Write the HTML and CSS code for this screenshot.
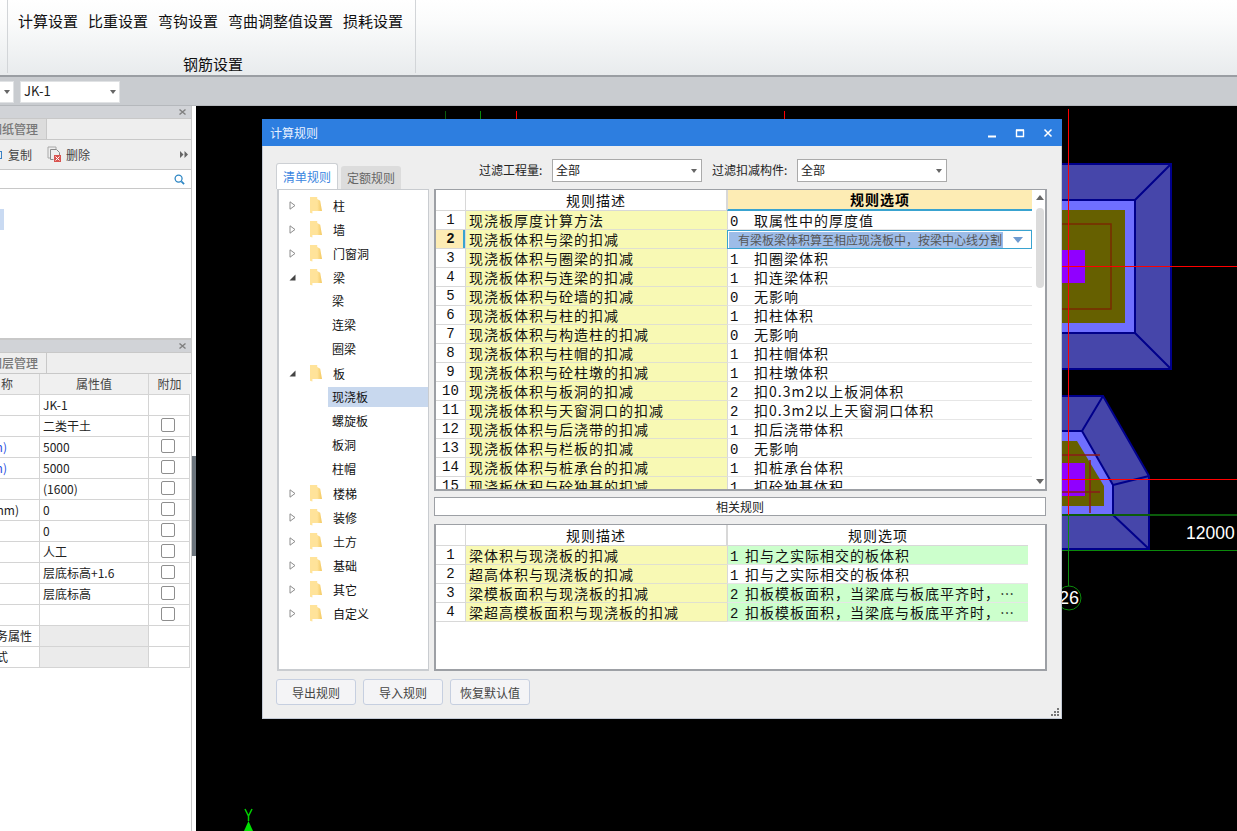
FILE: index.html
```html
<!DOCTYPE html>
<html lang="zh">
<head>
<meta charset="utf-8">
<title>计算规则</title>
<link rel="stylesheet" href="styles.css">
</head>
<body>
<div class="app">
  <header class="ribbon">
    <div class="ribbon-group">
      <div class="ribbon-items">
        <span>计算设置</span><span>比重设置</span><span>弯钩设置</span><span>弯曲调整值设置</span><span>损耗设置</span>
      </div>
      <div class="ribbon-label">钢筋设置</div>
    </div>
  </header>
  <div class="selector-bar">
    <div class="top-combo top-combo-a"><i class="arrow"></i></div>
    <div class="top-combo top-combo-b"><span>JK-1</span><i class="arrow"></i></div>
  </div>
  <div class="workspace">
    <aside class="side">
      <section class="panel panel-draw">
        <div class="panel-title"><svg width="7" height="6" viewBox="0 0 7 6"><path d="M.5.500l6 5M6.500.500l-6 5" stroke="#808080" stroke-width="1.400"/></svg></div>
        <div class="panel-tabs"><div class="panel-tab">图纸管理</div></div>
        <div class="panel-tools">
          <i class="copy-edge"></i>
          <span class="tool-copy">复制</span>
          <svg class="tool-icon" width="15" height="17" viewBox="0 0 15 17"><path d="M1 1h8v2M1 1v11h2" fill="none" stroke="#a8a8a8"/><path d="M3.500 3.500h6l3 3v3M3.500 3.500v10h3" fill="none" stroke="#8a8a8a"/><rect x="7" y="9" width="7" height="7" fill="#d9534f"/><path d="M8.500 10.500l4 4M12.500 10.500l-4 4" stroke="#fff"/></svg>
          <span class="tool-del">删除</span>
          <svg class="tool-more" width="8" height="7" viewBox="0 0 8 7"><path d="M0 0l3.500 3.500L0 7zM4.500 0L8 3.500 4.500 7z" fill="#666"/></svg>
        </div>
        <div class="panel-search">
          <svg width="11" height="11" viewBox="0 0 12 12"><circle cx="5" cy="5" r="3.800" fill="none" stroke="#2d86c4" stroke-width="1.400"/><path d="M8 8l3 3" stroke="#2d86c4" stroke-width="1.800"/></svg>
        </div>
        <div class="panel-list"><div class="list-pick"></div></div>
      </section>
      <section class="panel panel-prop">
        <div class="panel-title"><svg width="7" height="6" viewBox="0 0 7 6"><path d="M.5.500l6 5M6.500.500l-6 5" stroke="#808080" stroke-width="1.400"/></svg></div>
        <div class="panel-tabs"><div class="panel-tab">图层管理</div></div>
        <div class="prop-table">
          <div class="pc head name">称</div><div class="pc head mid">属性值</div><div class="pc head mid">附加</div>
          <div class="pc name"></div><div class="pc">JK-1</div><div class="pc"></div>
          <div class="pc name"></div><div class="pc">二类干土</div><div class="pc box"><i></i></div>
          <div class="pc name blue">(mm)</div><div class="pc">5000</div><div class="pc box"><i></i></div>
          <div class="pc name blue">(mm)</div><div class="pc">5000</div><div class="pc box"><i></i></div>
          <div class="pc name"></div><div class="pc">(1600)</div><div class="pc box"><i></i></div>
          <div class="pc name">(mm)</div><div class="pc">0</div><div class="pc box"><i></i></div>
          <div class="pc name"></div><div class="pc">0</div><div class="pc box"><i></i></div>
          <div class="pc name"></div><div class="pc">人工</div><div class="pc box"><i></i></div>
          <div class="pc name"></div><div class="pc">层底标高+1.6</div><div class="pc box"><i></i></div>
          <div class="pc name"></div><div class="pc">层底标高</div><div class="pc box"><i></i></div>
          <div class="pc name"></div><div class="pc"></div><div class="pc box"><i></i></div>
          <div class="pc name biz">业务属性</div><div class="pc off"></div><div class="pc"></div>
          <div class="pc name sty">样式</div><div class="pc off"></div><div class="pc"></div>
        </div>
      </section>
    </aside>
    <div class="splitter"><i></i></div>
    <main class="canvas">
      <svg class="drawing" width="1041" height="725" viewBox="196 106 1041 725">
        <g stroke="#00008b" stroke-width="2" fill="#4646aa">
          <rect x="1000" y="164" width="171" height="205"/>
          <rect x="1000" y="200" width="135" height="133" fill="#6f6fff"/>
          <path d="M1135 200L1171 164M1135 333L1171 369" fill="none"/>
        </g>
        <rect x="1000" y="210" width="125" height="113" fill="#666000"/>
        <path d="M1000 224H1111V309H1000" fill="none" stroke="#7a2a00" stroke-width="1.500"/>
        <rect x="1000" y="250" width="85" height="33" fill="#9000ff"/>
        <path d="M1000 396H1103L1149 476V549H1000Z" fill="#4646aa" stroke="#00008b" stroke-width="2"/>
        <path d="M1000 431H1082L1113 485V515H1000Z" fill="#6f6fff" stroke="#00008b" stroke-width="2"/>
        <path d="M1082 431L1103 396M1113 485L1149 476M1113 515L1149 549" fill="none" stroke="#00008b" stroke-width="2"/>
        <path d="M1000 441H1077L1104 486V506H1000Z" fill="#666000"/>
        <rect x="1000" y="463" width="85" height="33" fill="#9000ff"/>
        <path d="M1000 455H1100M1000 492H1100M1090 460V513" stroke="#8b1a1a" stroke-width="1.500" fill="none"/>
        <path d="M1000 515H1237" stroke="#0b5c0b" stroke-width="2" fill="none"/>
        <path d="M1000 550.500H1237M1068.500 515V586" stroke="#0b8a0b" fill="none"/>
        <path d="M1068.500 109V515M1000 266.500H1237M1000 479.500H1237" stroke="#f00" fill="none"/>
        <path d="M445.500 111V119" stroke="#0b5c0b" fill="none"/>
        <path d="M480.500 111V119" stroke="#0b8a0b" fill="none"/>
        <path d="M516.500 111V119M784.500 111V119" stroke="#f00" fill="none"/>
        <circle cx="1069" cy="598" r="12" fill="none" stroke="#0b8a0b"/>
        <text x="1069" y="604" class="cad-num" text-anchor="middle">26</text>
        <text x="1186" y="539" class="cad-dim">12000</text>
        <path d="M245 809L248.500 816L252 809M248.500 816V821" stroke="#00d000" stroke-width="1.500" fill="none"/>
        <path d="M248.500 821L244 831H253Z" fill="#00e000"/>
      </svg>

      <div class="dialog">
        <div class="dialog-title">
          <span class="dialog-name">计算规则</span>
          <div class="win-buttons">
            <svg width="10" height="10" viewBox="0 0 10 10"><path d="M1 8.500h8" stroke="#fff" stroke-width="2"/></svg>
            <svg width="10" height="10" viewBox="0 0 10 10"><path d="M1.500 2.500h7v6h-7z" fill="none" stroke="#fff" stroke-width="1.400"/><path d="M1 2h8" stroke="#fff" stroke-width="1.500"/></svg>
            <svg width="10" height="10" viewBox="0 0 10 10"><path d="M1.500 1.500l7 7M8.500 1.500l-7 7" stroke="#fff" stroke-width="1.500"/></svg>
          </div>
        </div>
        <div class="dialog-body">
          <div class="left-col">
            <div class="tabs">
              <div class="tab on">清单规则</div>
              <div class="tab">定额规则</div>
            </div>
            <ul class="tree">
              <li><svg class="tri" width="7" height="9" viewBox="0 0 7 9"><path d="M1 .8L6 4.500 1 8.200z" fill="#fff" stroke="#8c8c8c"/></svg><i class="folder"></i>柱</li>
              <li><svg class="tri" width="7" height="9" viewBox="0 0 7 9"><path d="M1 .8L6 4.500 1 8.200z" fill="#fff" stroke="#8c8c8c"/></svg><i class="folder"></i>墙</li>
              <li><svg class="tri" width="7" height="9" viewBox="0 0 7 9"><path d="M1 .8L6 4.500 1 8.200z" fill="#fff" stroke="#8c8c8c"/></svg><i class="folder"></i>门窗洞</li>
              <li><svg class="tri" width="7" height="9" viewBox="0 0 7 9"><path d="M6.500 1.500V7.500H.5z" fill="#444"/></svg><i class="folder"></i>梁</li>
              <li class="leaf"><span>梁</span></li>
              <li class="leaf"><span>连梁</span></li>
              <li class="leaf"><span>圈梁</span></li>
              <li><svg class="tri" width="7" height="9" viewBox="0 0 7 9"><path d="M6.500 1.500V7.500H.5z" fill="#444"/></svg><i class="folder"></i>板</li>
              <li class="leaf sel"><span>现浇板</span></li>
              <li class="leaf"><span>螺旋板</span></li>
              <li class="leaf"><span>板洞</span></li>
              <li class="leaf"><span>柱帽</span></li>
              <li><svg class="tri" width="7" height="9" viewBox="0 0 7 9"><path d="M1 .8L6 4.500 1 8.200z" fill="#fff" stroke="#8c8c8c"/></svg><i class="folder"></i>楼梯</li>
              <li><svg class="tri" width="7" height="9" viewBox="0 0 7 9"><path d="M1 .8L6 4.500 1 8.200z" fill="#fff" stroke="#8c8c8c"/></svg><i class="folder"></i>装修</li>
              <li><svg class="tri" width="7" height="9" viewBox="0 0 7 9"><path d="M1 .8L6 4.500 1 8.200z" fill="#fff" stroke="#8c8c8c"/></svg><i class="folder"></i>土方</li>
              <li><svg class="tri" width="7" height="9" viewBox="0 0 7 9"><path d="M1 .8L6 4.500 1 8.200z" fill="#fff" stroke="#8c8c8c"/></svg><i class="folder"></i>基础</li>
              <li><svg class="tri" width="7" height="9" viewBox="0 0 7 9"><path d="M1 .8L6 4.500 1 8.200z" fill="#fff" stroke="#8c8c8c"/></svg><i class="folder"></i>其它</li>
              <li><svg class="tri" width="7" height="9" viewBox="0 0 7 9"><path d="M1 .8L6 4.500 1 8.200z" fill="#fff" stroke="#8c8c8c"/></svg><i class="folder"></i>自定义</li>
            </ul>
          </div>
          <div class="right-col">
            <div class="filters">
              <label class="f-a">过滤工程量:</label>
              <div class="combo"><span>全部</span><i class="arrow"></i></div>
              <label class="f-b">过滤扣减构件:</label>
              <div class="combo"><span>全部</span><i class="arrow"></i></div>
            </div>
            <div class="grid grid-top">
              <div class="g-wrap">
                <div class="row head">
                  <div class="num"></div><div class="desc">规则描述</div><div class="opt hot">规则选项</div>
                </div>
                <div class="row"><div class="num">1</div><div class="desc">现浇板厚度计算方法</div><div class="opt"><b>0</b>取属性中的厚度值</div></div>
                <div class="row cur"><div class="num">2</div><div class="desc">现浇板体积与梁的扣减</div>
                  <div class="opt edit"><span class="edit-text">有梁板梁体积算至相应现浇板中，按梁中心线分割</span><i class="edit-arrow"></i></div></div>
                <div class="row"><div class="num">3</div><div class="desc">现浇板体积与圈梁的扣减</div><div class="opt"><b>1</b>扣圈梁体积</div></div>
                <div class="row"><div class="num">4</div><div class="desc">现浇板体积与连梁的扣减</div><div class="opt"><b>1</b>扣连梁体积</div></div>
                <div class="row"><div class="num">5</div><div class="desc">现浇板体积与砼墙的扣减</div><div class="opt"><b>0</b>无影响</div></div>
                <div class="row"><div class="num">6</div><div class="desc">现浇板体积与柱的扣减</div><div class="opt"><b>1</b>扣柱体积</div></div>
                <div class="row"><div class="num">7</div><div class="desc">现浇板体积与构造柱的扣减</div><div class="opt"><b>0</b>无影响</div></div>
                <div class="row"><div class="num">8</div><div class="desc">现浇板体积与柱帽的扣减</div><div class="opt"><b>1</b>扣柱帽体积</div></div>
                <div class="row"><div class="num">9</div><div class="desc">现浇板体积与砼柱墩的扣减</div><div class="opt"><b>1</b>扣柱墩体积</div></div>
                <div class="row"><div class="num">10</div><div class="desc">现浇板体积与板洞的扣减</div><div class="opt"><b>2</b>扣0.3m2以上板洞体积</div></div>
                <div class="row"><div class="num">11</div><div class="desc">现浇板体积与天窗洞口的扣减</div><div class="opt"><b>2</b>扣0.3m2以上天窗洞口体积</div></div>
                <div class="row"><div class="num">12</div><div class="desc">现浇板体积与后浇带的扣减</div><div class="opt"><b>1</b>扣后浇带体积</div></div>
                <div class="row"><div class="num">13</div><div class="desc">现浇板体积与栏板的扣减</div><div class="opt"><b>0</b>无影响</div></div>
                <div class="row"><div class="num">14</div><div class="desc">现浇板体积与桩承台的扣减</div><div class="opt"><b>1</b>扣桩承台体积</div></div>
                <div class="row"><div class="num">15</div><div class="desc">现浇板体积与砼独基的扣减</div><div class="opt"><b>1</b>扣砼独基体积</div></div>
              </div>
              <div class="scroll">
                <i class="sb-up"></i>
                <div class="sb-track"><div class="sb-thumb"></div></div>
                <i class="sb-down"></i>
              </div>
            </div>
            <div class="related">相关规则</div>
            <div class="grid grid-low">
              <div class="row head">
                <div class="num"></div><div class="desc">规则描述</div><div class="opt">规则选项</div>
              </div>
              <div class="row"><div class="num">1</div><div class="desc">梁体积与现浇板的扣减</div><div class="opt green"><b>1</b>扣与之实际相交的板体积</div></div>
              <div class="row"><div class="num">2</div><div class="desc">超高体积与现浇板的扣减</div><div class="opt"><b>1</b>扣与之实际相交的板体积</div></div>
              <div class="row"><div class="num">3</div><div class="desc">梁模板面积与现浇板的扣减</div><div class="opt green"><b>2</b>扣板模板面积，当梁底与板底平齐时，…</div></div>
              <div class="row"><div class="num">4</div><div class="desc">梁超高模板面积与现浇板的扣减</div><div class="opt green"><b>2</b>扣板模板面积，当梁底与板底平齐时，…</div></div>
            </div>
          </div>
        </div>
        <div class="dialog-foot">
          <button class="btn">导出规则</button>
          <button class="btn">导入规则</button>
          <button class="btn">恢复默认值</button>
        </div>
        <svg class="grip" width="9" height="9" viewBox="0 0 9 9"><path d="M7 1h2v2H7zM4 4h2v2H4zM7 4h2v2H7zM1 7h2v2H1zM4 7h2v2H4zM7 7h2v2H7z" fill="#777"/></svg>
      </div>
    </main>
  </div>
</div>
</body>
</html>
```

FILE: styles.css
```css
* { box-sizing: border-box; }
html, body { margin: 0; padding: 0; }
body {
  width: 1237px; height: 831px; overflow: hidden;
  font-family: "Noto Sans CJK SC", "Liberation Sans", sans-serif;
  font-size: 12px; color: #222; background: #fff;
}
.app { display: flex; flex-direction: column; width: 1237px; height: 831px; }
i { display: block; font-style: normal; }

/* ribbon */
.ribbon {
  height: 77px; flex: none; padding-left: 7px;
  background: linear-gradient(#ffffff, #fafbfb 30%, #e8ebed);
  border-bottom: 2px solid #9a9ea3;
}
.ribbon-group {
  width: 409px; height: 73px;
  border-left: 1px solid #d2d5d8; border-right: 1px solid #d2d5d8;
  display: flex; flex-direction: column; align-items: flex-start;
}
.ribbon-items { display: flex; gap: 10px; padding: 10px 0 0 10px; font-size: 15px; line-height: 22px; color: #111; }
.ribbon-label { margin: 21px 0 0 175px; font-size: 15px; line-height: 22px; color: #111; }

/* selector */
.selector-bar {
  height: 29px; flex: none; background: #c9ccd0;
  display: flex; gap: 6px; padding-top: 4px;
  border-bottom: 1px solid #b5b8bc;
}
.top-combo {
  height: 22px; background: #fff; border: 1px solid #e0e2e4;
  display: flex; align-items: center; justify-content: space-between;
  padding: 0 3px; font-size: 13px; line-height: 18px;
}
.top-combo span { margin-top: -2px; }
.top-combo-a { width: 14px; justify-content: flex-end; border-left: none; }
.top-combo-b { width: 100px; }
.arrow { width: 0; height: 0; border-left: 3.500px solid transparent; border-right: 3.500px solid transparent; border-top: 4px solid #666; }

/* workspace */
.workspace { flex: 1; display: flex; min-height: 0; }
.side { width: 192px; flex: none; border-right: 1px solid #c8c8c8; background: #fff; display: flex; flex-direction: column; }
.panel { display: flex; flex-direction: column; }
.panel-draw { height: 234px; border-bottom: 2px solid #c8c8c8; }
.panel-title { height: 12px; background: #d1d3d7; display: flex; justify-content: flex-end; align-items: center; padding-right: 5px; }
.panel-tabs { height: 22px; background: #eeeeee; border-top: 1px solid #c8c8c8; border-bottom: 1px solid #c8c8c8; }
.panel-tab {
  width: 47px; height: 20px; background: #dcdcdc; border-right: 1px solid #c8c8c8;
  display: flex; justify-content: flex-end; align-items: center; padding-right: 8px;
  overflow: hidden; white-space: nowrap; font-size: 12px; color: #777; font-weight: 500; line-height: 20px;
}
.panel-prop .panel-tab { background: #eeeeee; }
.panel-tools { height: 30px; background: #eeeeee; border-bottom: 1px solid #c8c8c8; display: flex; align-items: center; color: #444; }
.copy-edge { width: 2px; height: 8px; border: 1px solid #3b82c4; border-left: none; margin-right: 6px; }
.tool-copy { width: 39px; }
.tool-del { margin-left: 4px; }
.tool-more { margin-left: auto; margin-right: 3px; }
.panel-search { height: 19px; background: #fff; border-bottom: 1px solid #c8c8c8; display: flex; align-items: center; justify-content: flex-end; padding-right: 6px; }
.panel-list { flex: 1; background: #fff; padding-top: 20px; }
.list-pick { width: 4px; height: 21px; background: #c9daf2; }

.prop-table {
  display: grid; grid-template-columns: 40px 109px 41px; grid-auto-rows: 21px;
  width: 190px; border-right: 1px solid #d4d4d4;
}
.pc {
  border-right: 1px solid #d4d4d4; border-bottom: 1px solid #d4d4d4;
  padding-left: 3px; line-height: 20px; font-size: 12px; color: #222; white-space: nowrap; overflow: hidden;
}
.pc:nth-child(3n) { border-right: none; }
.pc.head { background: #f0f0f0; color: #444; }
.pc.mid { text-align: center; padding-left: 0; }
.pc.name { display: flex; justify-content: flex-end; padding: 0 20px 0 0; }
.pc.head.name { padding-right: 26px; }
.pc.blue { color: #2b4fe0; padding-right: 32px; }
.pc.biz { padding-right: 7px; }
.pc.sty { padding-right: 31px; }
.pc.off { background: #ebebeb; }
.pc.box { display: flex; align-items: center; justify-content: center; padding: 0 3px 0 0; }
.pc.box i { width: 14px; height: 14px; border: 1px solid #8e8e8e; border-radius: 2px; background: #fff; margin-top: -2px; }

.splitter { width: 4px; flex: none; background: #fff; padding-top: 350px; }
.splitter i { height: 100px; background: #6c757d; }

/* canvas */
.canvas { flex: 1; background: #000; position: relative; overflow: hidden; }
.drawing { position: absolute; left: 0; top: 0; }
.cad-num { fill: #fff; font-family: "Liberation Sans", sans-serif; font-size: 18px; }
.cad-dim { fill: #fff; font-family: "Liberation Sans", sans-serif; font-size: 17.500px; }

/* dialog */
.dialog {
  position: absolute; left: 66px; top: 13px; width: 800px; height: 600px;
  background: #eeeeee; border: 1px solid #c3c9d4; border-top: none;
  display: flex; flex-direction: column;
}
.dialog-title { height: 27px; flex: none; background: #2d7ee0; color: #e9f2ff; display: flex; align-items: center; justify-content: space-between; padding: 0 9px 0 8px; font-size: 12px; margin: 0 -1px; }
.win-buttons { display: flex; gap: 18px; }
.dialog-body { display: flex; padding: 13px 14px 0 13px; gap: 5px; height: 525px; flex: none; }
.left-col { width: 153px; flex: none; display: flex; flex-direction: column; }
.tabs { display: flex; gap: 3px; height: 30px; align-items: flex-end; padding-top: 4px; }
.tab { width: 60px; height: 23px; background: #dcdcdc; color: #666; border-radius: 3px 3px 0 0; text-align: center; line-height: 23px; font-size: 12px; }
.tab.on { width: 62px; height: 26px; background: #fff; color: #3a86e0; border: 1px solid #cdd0d4; border-bottom: none; line-height: 25px; }
.tree {
  list-style: none; margin: 0 0 0 1px; padding: 3px 0 0; height: 482px; width: 152px;
  background: #fff; border: 2px solid #c9ccd0; border-top-width: 1px; border-right-width: 1px;
}
.tree li { height: 24px; display: flex; align-items: center; font-size: 12px; color: #111; padding-left: 10px; position: relative; }
.tri { flex: none; margin-right: 14px; }
.folder { width: 12px; height: 17px; background: linear-gradient(90deg, #ffe39a 0 60%, #f3c860 100%); clip-path: polygon(0 0, 60% 0, 60% 15%, 85% 25%, 100% 85%, 20% 85%, 20% 100%, 0 95%); margin-right: 11px; }
.tree li.leaf { padding-left: 49px; }
.tree li.leaf span { display: block; padding-left: 4px; width: 101px; line-height: 20px; height: 20px; }
.tree li.sel span { background: #c8d8ee; }

.right-col { flex: 1; display: flex; flex-direction: column; min-width: 0; }
.filters { height: 30px; flex: none; display: flex; align-items: flex-start; font-size: 12px; color: #222; }
.filters label { line-height: 22px; white-space: nowrap; }
.f-a { margin-left: 45px; width: 73px; }
.f-b { margin-left: 10px; width: 85px; }
.combo { width: 150px; height: 23px; background: #fff; border: 1px solid #aaa; display: flex; align-items: center; justify-content: space-between; padding: 0 4px 2px 3px; }
.combo .arrow { margin-top: 2px; }

.grid { border: 2px solid #9da0a5; border-width: 1px 2px 2px 2px; background: #fff; overflow: hidden; flex: none; }
.grid-top { height: 302px; display: flex; width: 613px; }
.g-wrap { width: 596px; flex: none; overflow: hidden; }
.row { display: flex; height: 19px; font-size: 14px; letter-spacing: 1px; line-height: 18px; color: #111; }
.row.head { height: 21px; line-height: 20px; }
.num { width: 30px; flex: none; text-align: center; letter-spacing: 0; font-family: "Liberation Mono", monospace; font-size: 14px; background: #fff; border-right: 1px solid #d8d8d8; border-bottom: 1px solid #d8d8d8; }
.desc { width: 261px; flex: none; padding-left: 3px; background: #f8f9b4; border-bottom: 1px solid #e0e0d0; white-space: nowrap; overflow: hidden; }
.head .desc { background: #fff; text-align: center; padding-left: 0; border-right: 1px solid #d8d8d8; border-bottom: 1px solid #d8d8d8; }
.opt { width: 305px; flex: none; padding-left: 2px; background: #fff; border-bottom: 1px solid #e6e6e6; border-left: 1px solid #d8d8d8; white-space: nowrap; overflow: hidden; }
.head .opt { text-align: center; padding-left: 0; border-bottom: 1px solid #d8d8d8; }
.opt b { display: inline-block; width: 24px; font-weight: 400; letter-spacing: 0; font-family: "Liberation Mono", monospace; }
.grid-low .opt b { width: 15px; }
.opt.hot { background: #fdecb4; border-bottom: 2px solid #39a3d0; font-weight: 700; line-height: 18px; color: #000; }
.row.cur .num { background: #fdecb4; font-weight: 700; box-shadow: inset -2px 0 0 #39a3d0; }
.opt.edit { display: flex; align-items: center; justify-content: space-between; border: 1px solid #39a3d0; padding: 0 8px 0 1px; font-size: 12px; letter-spacing: 0; }
.edit-text { background: #9dbce8; color: #555; padding-left: 9px; width: 274px; line-height: 16px; height: 16px; overflow: hidden; }
.edit-arrow { width: 0; height: 0; border-left: 5px solid transparent; border-right: 5px solid transparent; border-top: 6px solid #6f9bd1; }
.scroll { width: 15px; flex: none; display: flex; flex-direction: column; align-items: center; background: #fff; padding: 5px 0; justify-content: space-between; }
.sb-up { border-left: 4px solid transparent; border-right: 4px solid transparent; border-bottom: 5px solid #666; width: 0; height: 0; }
.sb-down { border-left: 4px solid transparent; border-right: 4px solid transparent; border-top: 5px solid #666; width: 0; height: 0; }
.sb-track { flex: 1; width: 8px; padding-top: 8px; }
.sb-thumb { width: 8px; height: 80px; background: #dcdcdc; border-radius: 4px; }
.related { flex: none; margin-top: 6px; width: 612px; height: 19px; background: #fff; border: 1px solid #9da0a5; text-align: center; line-height: 17px; font-size: 12px; color: #222; }
.grid-low { margin-top: 8px; height: 147px; width: 613px; }
.grid-low .opt { width: 301px; }
.opt.green { background: #ccffcc; }

.dialog-foot { display: flex; gap: 7px; padding: 8px 0 0 13px; }
.btn { width: 80px; height: 26px; background: #f4f4f6; border: 1px solid #c6cfe0; border-radius: 3px; font: 12px "Noto Sans CJK SC", sans-serif; color: #444; padding: 0; }
.grip { position: absolute; right: 2px; bottom: 2px; }
```
